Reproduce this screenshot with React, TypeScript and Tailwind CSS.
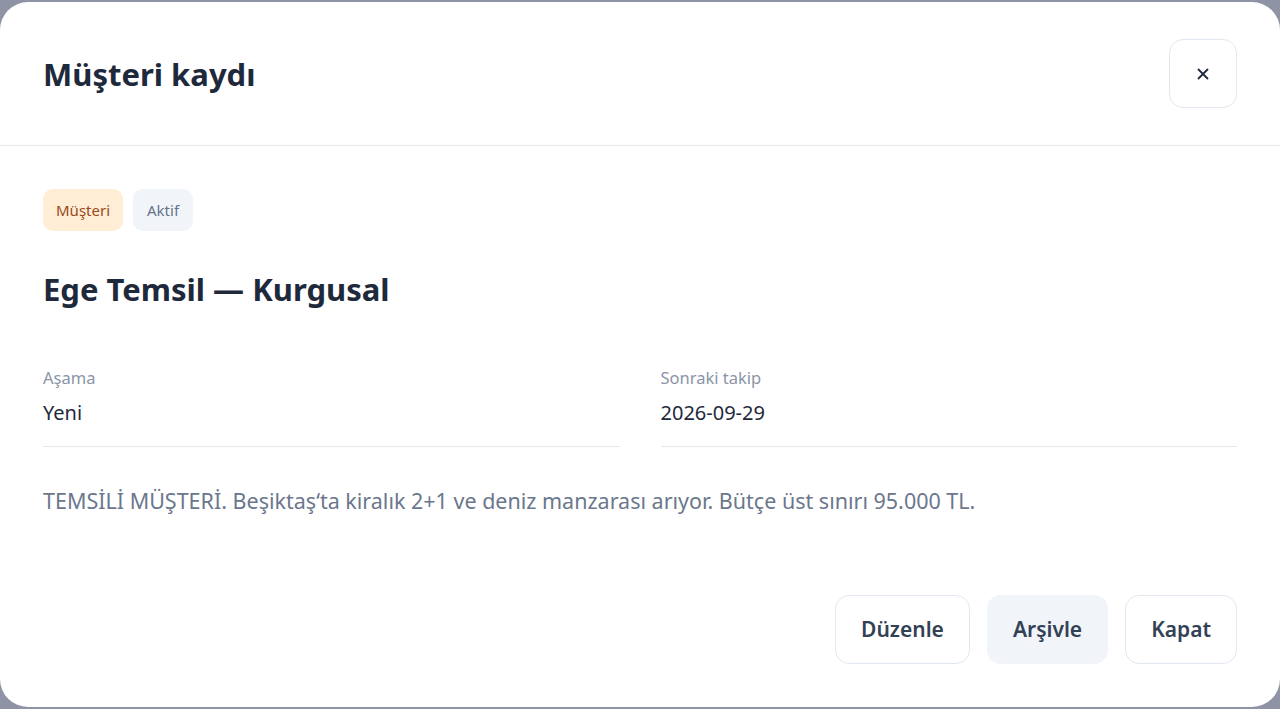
import React from "react";

const font = { fontFamily: '"Noto Sans", "Open Sans", sans-serif' };

function Field({ label, value }: { label: string; value: string }) {
  return (
    <div className="flex flex-col border-b border-[#e5e9ef] pb-[21px]">
      <span className="text-[16.5px] leading-[22px] text-[#8a94a6]">{label}</span>
      <span className="mt-[12px] text-[20px] leading-[24px] text-[#1e293b]">{value}</span>
    </div>
  );
}

export default function App() {
  return (
    <div className="h-[709px] w-[1280px] bg-[#8e94a6] pt-[2px] pb-[2px]" style={font}>
      <div className="flex h-full flex-col rounded-[28px] bg-white">
        {/* header */}
        <div className="flex items-center justify-between border-b border-[#e5e9ef] px-[43px] py-[37px]">
          <h1 className="text-[31px] font-bold leading-[40px] text-[#1e293b]">Müşteri kaydı</h1>
          <button className="flex h-[69px] w-[68px] items-center justify-center rounded-[14px] border border-[#e2e8f0] bg-white text-[#1e293b]">
            <svg width="12" height="12" viewBox="0 0 12 12" fill="none" stroke="currentColor" strokeWidth="1.8" strokeLinecap="round">
              <path d="M1.5 1.5l9 9M10.5 1.5l-9 9" />
            </svg>
          </button>
        </div>

        {/* body */}
        <div className="flex flex-1 flex-col px-[43px] pt-[43px]">
          <div className="flex gap-[10px]">
            <span className="flex h-[42px] items-center rounded-[10px] bg-[#ffedd5] px-[13px] text-[15px] text-[#9a4a1a]">Müşteri</span>
            <span className="flex h-[42px] items-center rounded-[10px] bg-[#f1f5f9] px-[14px] text-[15px] text-[#64748b]">Aktif</span>
          </div>

          <h2 className="mt-[36px] text-[31px] font-bold leading-[44px] text-[#1e293b]">Ege Temsil — Kurgusal</h2>

          <div className="mt-[56px] grid grid-cols-2 gap-[41px]">
            <Field label="Aşama" value="Yeni" />
            <Field label="Sonraki takip" value="2026-09-29" />
          </div>

          <p className="mt-[40px] text-[21.5px] leading-[28px] text-[#6b778c]">
            TEMSİLİ MÜŞTERİ. Beşiktaş‘ta kiralık 2+1 ve deniz manzarası arıyor. Bütçe üst sınırı 95.000 TL.
          </p>
        </div>

        {/* footer */}
        <div className="flex justify-end gap-[17px] px-[43px] pb-[43px]">
          <button className="h-[69px] rounded-[14px] border border-[#e2e8f0] bg-white px-[25px] text-[21px] font-semibold text-[#334155]">Düzenle</button>
          <button className="h-[69px] rounded-[14px] bg-[#f1f5f9] px-[26px] text-[21px] font-semibold text-[#334155]">Arşivle</button>
          <button className="h-[69px] rounded-[14px] border border-[#e2e8f0] bg-white px-[25px] text-[21px] font-semibold text-[#334155]">Kapat</button>
        </div>
      </div>
    </div>
  );
}
